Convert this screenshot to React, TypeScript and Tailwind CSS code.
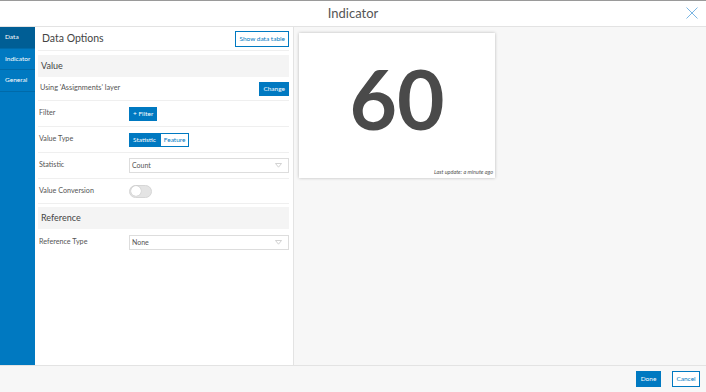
import React from "react";

// Small building blocks for the settings panel

function Row({ label, h = "h-[25px]", children }: { label: string; h?: string; children?: React.ReactNode }) {
  return (
    <div className={`flex ${h} items-center border-b border-[#efefef] pl-[1px]`}>
      <span className="w-[90px] text-[7.2px] text-[#555]">{label}</span>
      <div className="flex flex-1 items-center">{children}</div>
    </div>
  );
}

function SectionHeader({ title }: { title: string }) {
  return (
    <div className="flex h-[22px] items-center bg-[#f4f4f4] pl-[3px] text-[9px] text-[#444]">
      {title}
    </div>
  );
}

function Select({ value }: { value: string }) {
  return (
    <div className="flex h-[15px] flex-1 items-center justify-between border border-[#ddd] pl-[2px] pr-[6px] text-[7px] text-[#555]">
      <span>{value}</span>
      <svg width="7" height="5" viewBox="0 0 7 5">
        <path d="M0.5 0.5 L6.5 0.5 L3.5 4.2 Z" fill="none" stroke="#c8c8c8" strokeWidth="0.8" />
      </svg>
    </div>
  );
}

export default function App() {
  const tabs = ["Data", "Indicator", "General"];

  return (
    <div className="flex h-[392px] w-[706px] flex-col overflow-hidden bg-white font-['Lato','Noto_Sans',sans-serif]">
      {/* Header */}
      <div className="relative flex h-[27px] shrink-0 items-center justify-center border-t border-[#9a9a9a] border-b border-b-[#e3e3e3]">
        <span className="text-[13px] text-[#555]">Indicator</span>
        <svg
          className="absolute right-[8px] top-[6px]"
          width="12"
          height="12"
          viewBox="0 0 12 12"
        >
          <path d="M0.5 0.5 L11.5 11.5 M11.5 0.5 L0.5 11.5" stroke="#7bb6e3" strokeWidth="1" />
        </svg>
      </div>

      {/* Body */}
      <div className="flex min-h-0 flex-1">
        {/* Sidebar tabs */}
        <div className="flex w-[35px] shrink-0 flex-col bg-[#0079c1]">
          {tabs.map((t, i) => (
            <div
              key={t}
              className={`flex h-[21.5px] items-center border-b border-[#006aa9] pl-[5px] text-[6.5px] text-white ${
                i === 0 ? "bg-[#005e95]" : ""
              }`}
            >
              {t}
            </div>
          ))}
        </div>

        {/* Settings panel */}
        <div className="w-[259px] shrink-0 border-r border-[#e3e3e3] bg-white pl-[3px] pr-[4px]">
          <div className="flex h-[24px] items-center justify-between border-b border-[#efefef] pl-[4px]">
            <span className="text-[10.5px] text-[#444]">Data Options</span>
            <button className="h-[16px] border border-[#0079c1] px-[3px] text-[6.5px] text-[#0079c1]">
              Show data table
            </button>
          </div>

          <div className="pt-[4px]">
            <SectionHeader title="Value" />
          </div>
          <div className="flex h-[24px] items-center justify-between border-b border-[#efefef] pl-[2px]">
            <span className="text-[7.3px] text-[#555]">Using 'Assignments' layer</span>
            <button className="h-[14px] bg-[#0079c1] px-[4px] text-[6.5px] text-white">Change</button>
          </div>

          <Row label="Filter" h="h-[26px]">
            <button className="h-[14px] bg-[#0079c1] px-[4px] text-[6.5px] text-white">+ Filter</button>
          </Row>
          <Row label="Value Type" h="h-[26px]">
            <div className="flex h-[14px]">
              <span className="flex items-center bg-[#0079c1] px-[4px] text-[6.5px] text-white">Statistic</span>
              <span className="flex items-center border border-[#0079c1] px-[3px] text-[6.5px] text-[#0079c1]">
                Feature
              </span>
            </div>
          </Row>
          <Row label="Statistic" h="h-[26px]">
            <Select value="Count" />
          </Row>
          <Row label="Value Conversion" h="h-[25px]">
            <div className="flex h-[13px] w-[23px] items-center rounded-full border border-[#d6d6d6] bg-[#e4e4e4] pl-[1px]">
              <span className="h-[10px] w-[10px] rounded-full bg-white shadow-[0_0_1px_rgba(0,0,0,0.3)]" />
            </div>
          </Row>

          <div className="pt-[3px]">
            <SectionHeader title="Reference" />
          </div>
          <div className="flex h-[27px] items-center pl-[1px]">
            <span className="w-[90px] text-[7.2px] text-[#555]">Reference Type</span>
            <Select value="None" />
          </div>
        </div>

        {/* Preview */}
        <div className="flex-1 bg-[#f7f7f7] pl-[5px] pt-[6px]">
          <div className="relative flex h-[145px] w-[196px] items-center justify-center bg-white shadow-[0_0_3px_rgba(0,0,0,0.25)]">
            <span className="-mt-[16px] text-[82px] font-bold leading-none text-[#4a4a4a]">60</span>
            <span className="absolute bottom-[2px] right-[2px] text-[5.5px] italic text-[#555]">
              Last update: a minute ago
            </span>
          </div>
        </div>
      </div>

      {/* Footer */}
      <div className="flex h-[27px] shrink-0 items-center justify-end gap-[11px] border-t border-[#e3e3e3] bg-[#f7f7f7] pr-[6px]">
        <button className="h-[16px] w-[25px] bg-[#0079c1] text-[6.5px] text-white">Done</button>
        <button className="h-[16px] w-[28px] border border-[#0079c1] bg-white text-[6.5px] text-[#0079c1]">
          Cancel
        </button>
      </div>
    </div>
  );
}
